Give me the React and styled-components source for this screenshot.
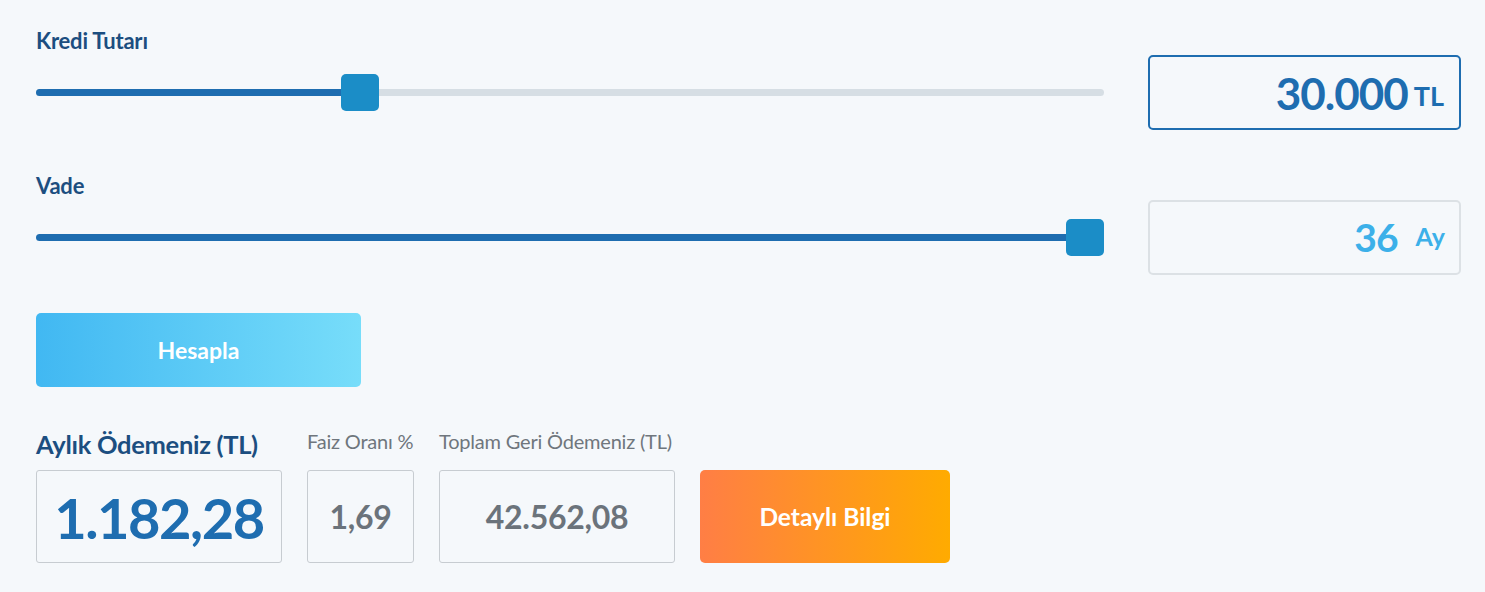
import styled, { createGlobalStyle } from "styled-components";

const GlobalStyle = createGlobalStyle`
  html, body {
    margin: 0;
    padding: 0;
    background: #f5f8fb;
  }
  body {
    font-family: Lato, "Open Sans", sans-serif;
  }
`;

const Page = styled.div`
  width: 1485px;
  height: 592px;
  box-sizing: border-box;
  padding: 28px 24px 0 36px;
  background: #f5f8fb;
`;

const Field = styled.div`
  display: grid;
  grid-template-columns: 1068px 313px;
  grid-template-rows: 27px 75px;
  column-gap: 44px;
  margin-bottom: ${(p) => p.$gap || 0}px;
`;

const Label = styled.div`
  grid-column: 1 / 3;
  font-size: 22px;
  line-height: 26px;
  font-weight: 700;
  color: #1c4e80;
  letter-spacing: -0.2px;
`;

const SliderWrap = styled.div`
  position: relative;
  display: flex;
  align-items: center;
  height: 75px;
`;

const Track = styled.div`
  flex: 1;
  height: 7px;
  border-radius: 4px;
  background: #d6dee4;
  overflow: hidden;
  display: flex;
`;

const Fill = styled.div`
  height: 100%;
  background: #1e6db0;
`;

const Thumb = styled.div`
  position: absolute;
  top: 50%;
  width: 38px;
  height: 37px;
  margin-top: -19px;
  border-radius: 5px;
  background: #1b8dc7;
`;

const ValueBox = styled.div`
  box-sizing: border-box;
  height: 75px;
  border: 2px solid ${(p) => (p.$active ? "#1e6db0" : "#dce1e5")};
  border-radius: 5px;
  display: flex;
  align-items: center;
  justify-content: flex-end;
  padding-right: ${(p) => p.$pad}px;
  gap: ${(p) => p.$space}px;
  color: ${(p) => (p.$active ? "#1e6db0" : "#3cb0e9")};
`;

const BigNum = styled.span`
  font-size: ${(p) => p.$size}px;
  font-weight: 700;
  letter-spacing: -1px;
  line-height: 1;
`;

const Unit = styled.span`
  font-size: ${(p) => p.$size}px;
  font-weight: 700;
  line-height: 1;
  margin-top: ${(p) => p.$shift || 0}px;
`;

const Slider = ({ percent }) => (
  <SliderWrap>
    <Track>
      <Fill style={{ width: `${percent}%` }} />
    </Track>
    <Thumb style={{ left: `calc(${percent}% - ${(38 * percent) / 100}px)` }} />
  </SliderWrap>
);

const Button = styled.button`
  display: flex;
  align-items: center;
  justify-content: center;
  width: ${(p) => p.$w}px;
  height: ${(p) => p.$h}px;
  border: none;
  border-radius: 5px;
  color: #fff;
  font-family: Lato, "Open Sans", sans-serif;
  font-weight: 700;
  font-size: ${(p) => p.$fs}px;
  background: ${(p) => p.$bg};
  cursor: pointer;
  padding: 0;
`;

const Results = styled.div`
  display: flex;
  align-items: flex-end;
  gap: 25px;
  margin-top: 42px;
`;

const Column = styled.div`
  display: flex;
  flex-direction: column;
  width: ${(p) => p.$w}px;
`;

const ResultLabel = styled.div`
  white-space: nowrap;
  font-size: ${(p) => (p.$big ? 25.5 : 20)}px;
  line-height: ${(p) => (p.$big ? 30 : 24)}px;
  font-weight: ${(p) => (p.$big ? 700 : 400)};
  color: ${(p) => (p.$big ? "#1c4e80" : "#6f767d")};
  margin-bottom: ${(p) => (p.$big ? 11 : 17)}px;
  letter-spacing: ${(p) => (p.$big ? -0.3 : -0.2)}px;
`;

const ResultBox = styled.div`
  box-sizing: border-box;
  height: 93px;
  border: 1px solid #c7ccd1;
  border-radius: 3px;
  display: flex;
  align-items: center;
  justify-content: center;
  font-size: ${(p) => (p.$big ? 56 : 32)}px;
  font-weight: 700;
  letter-spacing: ${(p) => (p.$big ? -1.5 : -0.3)}px;
  color: ${(p) => (p.$big ? "#1e6db0" : "#6b737b")};
  padding-top: ${(p) => (p.$big ? 2 : 0)}px;
`;

export default function App() {
  return (
    <>
      <GlobalStyle />
      <Page>
        <Field $gap={43}>
          <Label>Kredi Tutarı</Label>
          <Slider percent={29.6} />
          <ValueBox $active $pad={15} $space={6}>
            <BigNum $size={44}>30.000</BigNum>
            <Unit $size={27} $shift={6}>TL</Unit>
          </ValueBox>
        </Field>
        <Field>
          <Label>Vade</Label>
          <Slider percent={100} />
          <ValueBox $pad={14} $space={18}>
            <BigNum $size={39}>36</BigNum>
            <Unit $size={25} $shift={-2}>Ay</Unit>
          </ValueBox>
        </Field>
        <Button
          $w={325}
          $h={74}
          $fs={23}
          $bg="linear-gradient(90deg, #41b8f2 0%, #77ddfa 100%)"
          style={{ marginTop: 38 }}
        >
          Hesapla
        </Button>
        <Results>
          <Column $w={246}>
            <ResultLabel $big>Aylık Ödemeniz (TL)</ResultLabel>
            <ResultBox $big>1.182,28</ResultBox>
          </Column>
          <Column $w={107}>
            <ResultLabel>Faiz Oranı %</ResultLabel>
            <ResultBox>1,69</ResultBox>
          </Column>
          <Column $w={236}>
            <ResultLabel>Toplam Geri Ödemeniz (TL)</ResultLabel>
            <ResultBox>42.562,08</ResultBox>
          </Column>
          <Button
            $w={250}
            $h={93}
            $fs={24.5}
            $bg="linear-gradient(90deg, #ff7e45 0%, #ffab00 100%)"
          >
            Detaylı Bilgi
          </Button>
        </Results>
      </Page>
    </>
  );
}
